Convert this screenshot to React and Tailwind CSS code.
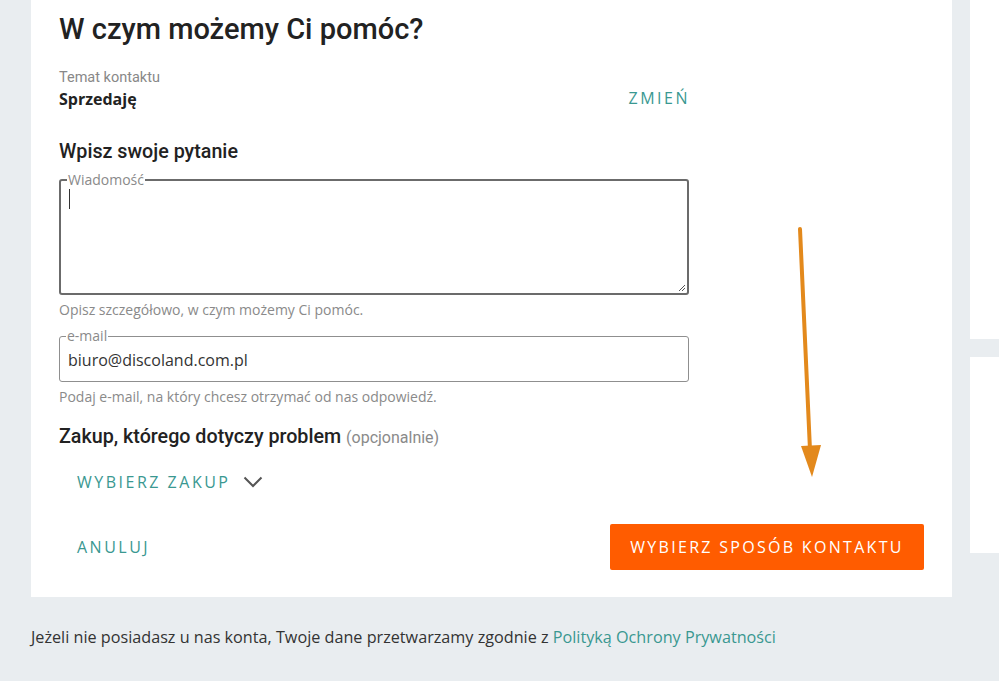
import React from "react";

const teal = "text-[#3a9891]";

const OutlinedField = ({ label, children, className }) => (
    <fieldset className={`rounded-[3px] px-[8px] ${className}`}>
        <legend className="px-[1px] ml-[-2px] text-[14px] leading-[14px] text-[#8a8a8a]">{label}</legend>
        {children}
    </fieldset>
);

const App = () => {
    return (
        <div
            className="relative w-[999px] h-[681px] overflow-hidden bg-[#e9edf0]"
            style={{ fontFamily: '"Open Sans", "Liberation Sans", sans-serif' }}
        >
            <div className="flex items-start pl-[31px] gap-[18px]">
                {/* main card */}
                <div className="w-[921px] h-[597px] shrink-0 bg-white px-[28px] pt-[11px]">
                    <h1
                        className="text-[29px] leading-[36px] text-[#222] font-medium"
                        style={{ fontFamily: "Roboto, sans-serif" }}
                    >
                        W czym możemy Ci pomóc?
                    </h1>

                    <div className="w-[630px] mt-[21px] flex items-end justify-between">
                        <div>
                            <div
                                className="text-[14.5px] leading-[19px] text-[#888]"
                                style={{ fontFamily: "Roboto, sans-serif" }}
                            >
                                Temat kontaktu
                            </div>
                            <div className="text-[16px] leading-[24px] font-bold text-[#222]">Sprzedaję</div>
                        </div>
                        <button className={`text-[16px] leading-[22px] tracking-[2.5px] ${teal} mb-[2px] mr-[-1px]`}>
                            ZMIEŃ
                        </button>
                    </div>

                    <h2
                        className="mt-[28px] text-[19.7px] leading-[26px] font-medium text-[#222]"
                        style={{ fontFamily: "Roboto, sans-serif" }}
                    >
                        Wpisz swoje pytanie
                    </h2>

                    <OutlinedField label="Wiadomość" className="w-[630px] h-[122px] mt-[8px] border-2 border-[#6b6b6b] relative">
                        <div className="mt-[2px] w-[1px] h-[20px] bg-[#333]" />
                        <svg className="absolute right-[1px] bottom-[1px]" width="9" height="9" viewBox="0 0 9 9">
                            <path d="M8 2 L2 8 M8 5 L5 8" stroke="#555" strokeWidth="1" />
                        </svg>
                    </OutlinedField>
                    <div className="mt-[5px] text-[14px] leading-[19px] text-[#8a8a8a]">
                        Opisz szczegółowo, w czym możemy Ci pomóc.
                    </div>

                    <OutlinedField label="e-mail" className="w-[630px] h-[53px] mt-[10px] border border-[#8f8f8f]">
                        <div className="text-[16px] leading-[24px] text-[#333] mt-[5px]">biuro@discoland.com.pl</div>
                    </OutlinedField>
                    <div className="mt-[5px] text-[14px] leading-[19px] text-[#8a8a8a]">
                        Podaj e-mail, na który chcesz otrzymać od nas odpowiedź.
                    </div>

                    <div className="mt-[18px] text-[19.7px] leading-[26px] text-[#222]" style={{ fontFamily: "Roboto, sans-serif" }}>
                        <span className="font-medium">Zakup, którego dotyczy problem</span>{" "}
                        <span className="text-[16px] text-[#8a8a8a]">(opcjonalnie)</span>
                    </div>

                    <button className="mt-[20px] ml-[18px] flex items-center gap-[13px]">
                        <span className={`text-[16px] leading-[22px] tracking-[2.5px] ${teal}`}>WYBIERZ ZAKUP</span>
                        <svg width="20" height="12" viewBox="0 0 20 12" fill="none">
                            <path d="M1.5 1.5 L10 10 L18.5 1.5" stroke="#555" strokeWidth="2" />
                        </svg>
                    </button>

                    <div className="mt-[31px] flex items-center justify-between">
                        <button className={`ml-[18px] text-[16px] leading-[22px] tracking-[2.5px] ${teal}`}>ANULUJ</button>
                        <button className="w-[314px] h-[46px] rounded-[2px] bg-[#ff5c00] text-white text-[16px] tracking-[2.3px]">
                            WYBIERZ SPOSÓB KONTAKTU
                        </button>
                    </div>
                </div>

                {/* right column */}
                <div className="flex flex-col gap-[18px] w-[40px] shrink-0">
                    <div className="h-[339px] bg-white" />
                    <div className="h-[196px] bg-white" />
                </div>
            </div>

            <p className="mt-[29px] ml-[31px] text-[16.2px] leading-[22px] text-[#333]">
                Jeżeli nie posiadasz u nas konta, Twoje dane przetwarzamy zgodnie z{" "}
                <a className={teal}>Polityką Ochrony Prywatności</a>
            </p>

            {/* annotation arrow */}
            <svg className="absolute left-0 top-0 pointer-events-none" width="999" height="681">
                <line x1="800" y1="229" x2="810" y2="450" stroke="#e3891c" strokeWidth="4" strokeLinecap="round" />
                <polygon points="801,446 821,445 812,477" fill="#e3891c" />
            </svg>
        </div>
    );
};

export default App;
